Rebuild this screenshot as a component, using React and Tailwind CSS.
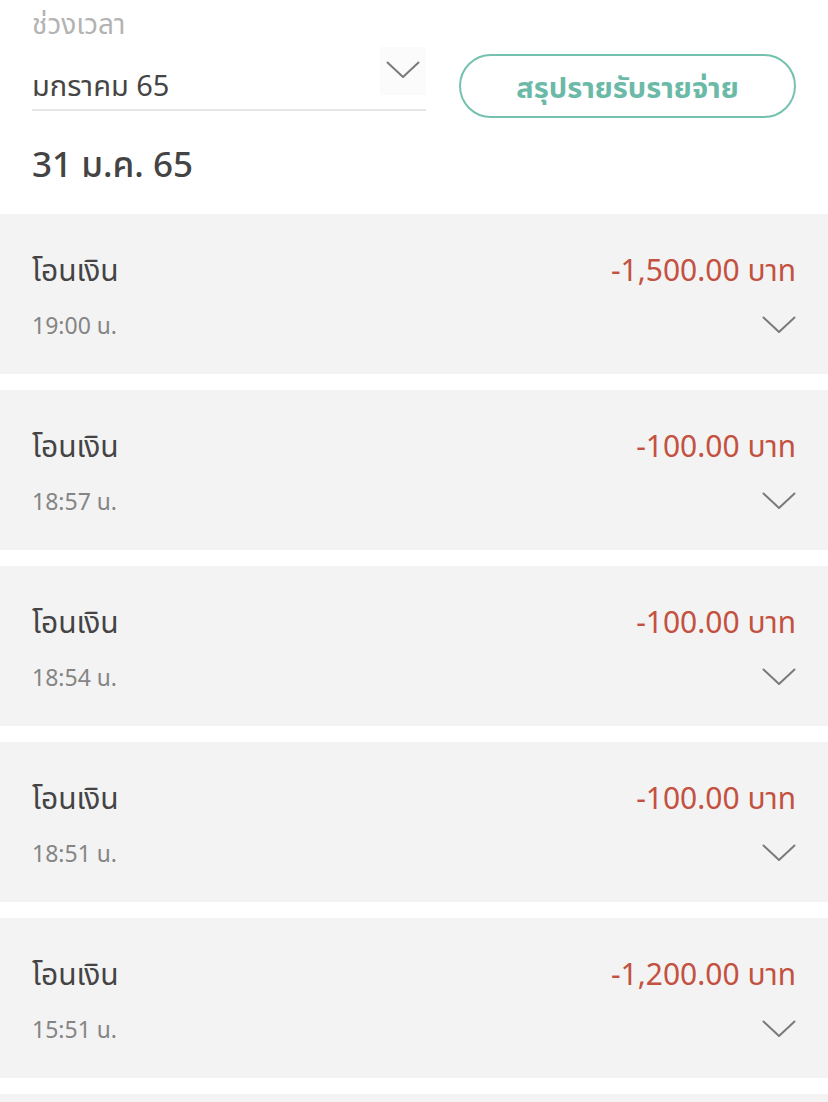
import React from "react";

const Chevron = ({ w = 34, h = 18, color = "#7a7a7a" }) => (
  <svg width={w} height={h} viewBox="0 0 34 18" fill="none">
    <path d="M1.5 1.5 L17 16 L32.5 1.5" stroke={color} strokeWidth="2" strokeLinecap="round" strokeLinejoin="round" />
  </svg>
);

const items = [
  { amount: "-1,500.00 บาท", time: "19:00 น." },
  { amount: "-100.00 บาท", time: "18:57 น." },
  { amount: "-100.00 บาท", time: "18:54 น." },
  { amount: "-100.00 บาท", time: "18:51 น." },
  { amount: "-1,200.00 บาท", time: "15:51 น." },
];

export default function App() {
  return (
    <div
      className="w-[828px] h-[1102px] overflow-hidden bg-white"
      style={{ fontFamily: '"Noto Sans", "Noto Sans Thai", "Open Sans", sans-serif' }}
    >
      <div className="px-8 pt-[7px]">
        <div className="flex gap-[33px]">
          <div className="w-[394px]">
            <div className="text-[28px] leading-[32px] text-[#b3b3b3]">ช่วงเวลา</div>
            <div className="flex justify-between items-start h-[72px] border-b-2 border-[#e6e6e6]">
              <div className="mt-[29px] text-[29px] leading-[34px] text-[#454545]">มกราคม 65</div>
              <div className="mt-[8px] w-[46px] h-[48px] bg-[#fbfbfb] flex items-start justify-center pt-[14px]">
                <Chevron />
              </div>
            </div>
          </div>
          <button className="mt-[47px] h-[64px] flex-1 rounded-full border-2 border-[#74c1af] text-[#6bbaa7] font-bold text-[29px] leading-none flex items-center justify-center">
            สรุปรายรับรายจ่าย
          </button>
        </div>
        <div className="mt-[26px] mb-[30px] text-[35px] leading-[40px] font-medium text-[#444444]">
          31 ม.ค. 65
        </div>
      </div>
      <div className="flex flex-col gap-[16px]">
        {items.map((it, i) => (
          <div key={i} className="h-[160px] shrink-0 bg-[#f3f3f3] px-8 pt-[38px]">
            <div className="flex justify-between items-center h-[36px]">
              <span className="text-[30px] leading-[36px] text-[#444444]">โอนเงิน</span>
              <span className="text-[30px] leading-[36px] text-[#c3513f]">{it.amount}</span>
            </div>
            <div className="mt-[23px] flex justify-between items-center h-[28px]">
              <span className="text-[23px] leading-[28px] text-[#858585]">{it.time}</span>
              <Chevron />
            </div>
          </div>
        ))}
        <div className="h-[160px] shrink-0 bg-[#f3f3f3]" />
      </div>
    </div>
  );
}
